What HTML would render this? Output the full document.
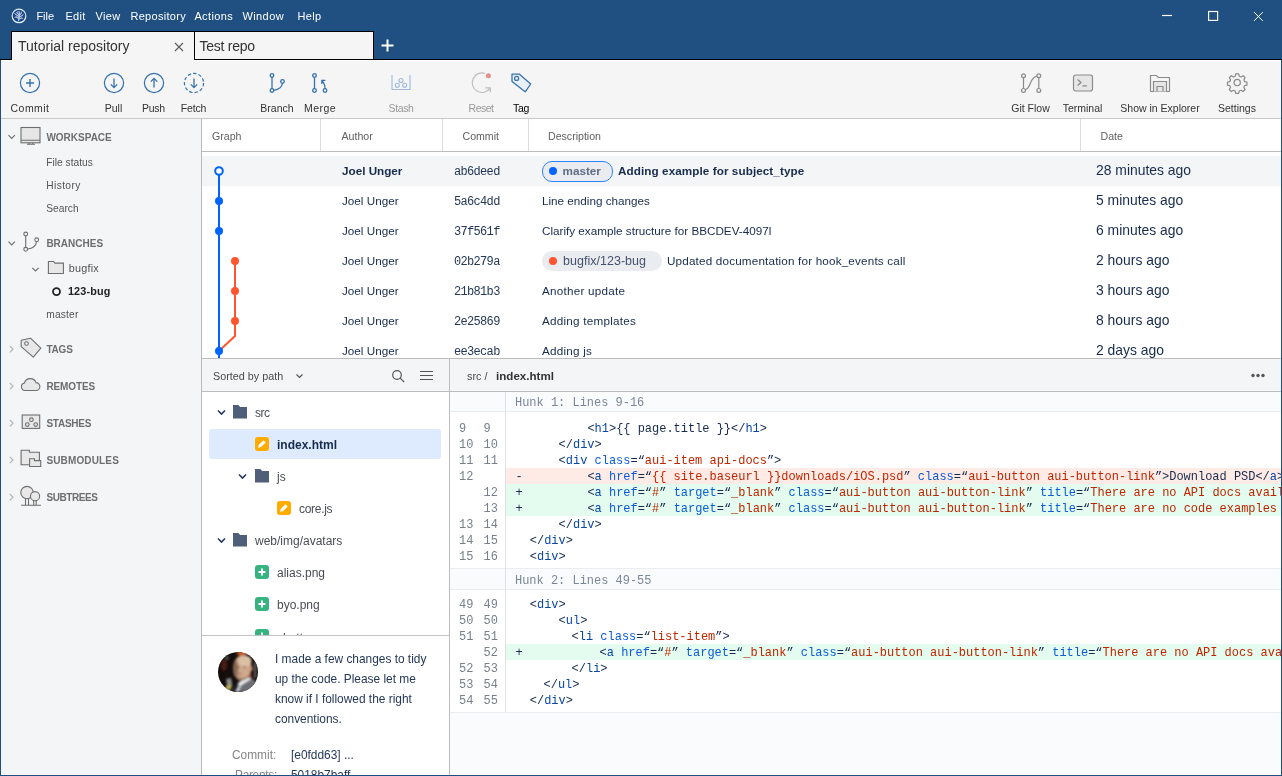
<!DOCTYPE html>
<html><head><meta charset="utf-8"><title>Sourcetree</title>
<style>
*{box-sizing:border-box;margin:0;padding:0}
html,body{width:1282px;height:776px;overflow:hidden;background:#205081;font-family:"Liberation Sans",sans-serif;font-size:12px;color:#172b4d}
.abs{position:absolute}
#win{position:absolute;left:0;top:0;width:1282px;height:776px;background:#205081;overflow:hidden;will-change:transform}
/* title / menu */
#menu{position:absolute;left:0;top:0;width:1282px;height:31px;color:#fff;font-size:11px}
#menu span{position:absolute;top:7.600px;margin-left:.400px;line-height:16px;white-space:nowrap}
/* tabs */
#tabline{position:absolute;left:0;top:59px;width:1282px;height:1px;background:#000}
.tab{position:absolute;top:31px;height:29px;background:#f5f5f5;border:1px solid #000;font-size:14px;color:#333;line-height:29px;white-space:nowrap}
#tab1{left:11px;width:183px;height:29px;border-bottom:none;border-right:none;padding-left:6px;z-index:2}
#tab2{left:194px;width:180px;padding-left:4.500px;letter-spacing:-.25px}
/* toolbar */
#toolbar{position:absolute;left:1px;top:60px;width:1280px;height:59px;background:#f5f5f5;border-bottom:1px solid #c8c8c8}
.tb{position:absolute;top:0;height:58px;width:100px;margin-left:-50px;text-align:center;font-size:10.500px;color:#333}
.tb svg{position:absolute;left:37px;top:10px;width:26px;height:26px;overflow:visible}
.tb span{position:absolute;left:0;width:100px;top:41px;line-height:14px;white-space:nowrap}
.tb.dis span{color:#999}
/* sidebar */
#side{position:absolute;left:1px;top:119px;width:200px;height:656px;background:#f4f5f7}
#sideb{position:absolute;left:201px;top:119px;width:1px;height:656px;background:#b9b9b9}
.sh{position:absolute;left:45.400px;font-weight:bold;font-size:10px;color:#6e6e6e;margin-top:.700px;line-height:14px;white-space:nowrap}
.si{position:absolute;left:45.300px;font-size:10.200px;color:#545454;margin-top:.600px;line-height:14px;white-space:nowrap}
/* main */
#main{position:absolute;left:202px;top:119px;width:1079px;height:656px;background:#fff}

/* table */
#thead{position:absolute;left:0;top:0;width:1079px;height:33px;border-bottom:1px solid #bcbcbc;background:#fff}
#thead span{position:absolute;top:10px;line-height:14px;font-size:10.600px;color:#606060;white-space:nowrap}
#thead i{position:absolute;top:0;width:1px;height:32px;background:#dcdcdc}
.row{position:absolute;left:0;width:1079px;height:30px;font-size:11.7px;color:#172b4d;white-space:nowrap}
.row span{position:absolute;top:8px;line-height:14px}
.row .a{left:140px}.row .h{left:252px;top:8.700px;font-family:"Liberation Mono",monospace;font-size:12px;letter-spacing:-.68px;color:#253858}
.row .d{left:340px}.row .t{left:894px;font-size:13.900px;top:6.300px;line-height:16px}
.row.sel{background:#f4f5f7;font-weight:bold}.row.sel .h,.row.sel .t{font-weight:normal}
.pill{position:absolute;top:5px;height:20px;border-radius:10px;background:#ebecf0;color:#5e6c84;font-weight:bold;font-size:11.7px;line-height:20px;padding-left:21px}
.pill i{position:absolute;left:7px;top:5.800px;width:8.400px;height:8.400px;border-radius:50%}
/* lower */
#lowtop{position:absolute;left:0;top:239px;width:1079px;height:1px;background:#bcbcbc}
#fhead{position:absolute;left:0;top:240px;width:1079px;height:33px;background:#f4f5f7;border-bottom:1px solid #bcbcbc;font-size:10.800px;color:#4a4a4a}
#fhead span{position:absolute;top:10px;line-height:14px;white-space:nowrap}
#vdiv{position:absolute;left:247px;top:240px;width:1px;height:416px;background:#bcbcbc}
#tree{position:absolute;left:0;top:273px;width:247px;height:243px;overflow:hidden;background:#fff;font-size:12px;color:#4a4d55}
#tree span{position:absolute;line-height:16px;white-space:nowrap}
#cmt{position:absolute;left:0;top:516px;width:247px;height:140px;border-top:1px solid #c4c4c4;background:#fff;overflow:hidden;font-size:11.900px;color:#253858}
#cmt span{position:absolute;white-space:nowrap;line-height:20px}
#diff{position:absolute;left:248px;top:273px;width:831px;height:383px;background:#fafbfc;overflow:hidden;font-family:"Liberation Mono",monospace;font-size:11.980px;color:#172b4d}
.hh{position:absolute;left:0;width:831px;height:21px;background:#fafbfc;border-top:1px solid #ebecf0;border-bottom:1px solid #ebecf0;color:#7a869a;line-height:22px;padding-left:65px;white-space:pre;overflow:hidden}
.hb{position:absolute;left:0;width:831px;background:#fff}
.gsep{position:absolute;left:55px;width:1px;background:#dfe1e6;z-index:1}
.ln{position:absolute;left:0;width:831px;height:16px;line-height:16px;white-space:pre}
.ln b{position:absolute;left:9px;top:1px;font-weight:normal;color:#78808c}
.ln b+b{left:33.500px}
.ln u{position:absolute;left:56px;right:0;top:0;height:16px;text-decoration:none}
.ln code{position:absolute;left:65.400px;top:1px;font:inherit;white-space:pre}
.ln.del u{background:#ffebe6}.ln.add u{background:#e3fcef}
.g{color:#0747a6}.n{color:#0b5cd9}.v{color:#bf2600}
</style></head><body>
<div id="win">
<div id="menu">
<svg class="abs" style="left:11px;top:8px" width="16" height="16" viewBox="0 0 16 16"><circle cx="8" cy="7.900" r="6.800" fill="#15478a" stroke="#e9eef5" stroke-width="1.200"/><g fill="none" stroke="#b9c8e0" stroke-linecap="round"><path d="M7.600 12.600C7.900 10.500 8 8.500 8.400 5.800" stroke-width="1.300"/><path d="M7.800 10.400L5.200 8.900M8 8.700L4.600 6.400M8.100 7.200L5.900 4.600M8.400 5.800L8.100 3.400M8.200 7.600L10.400 5M8 9.300L11.300 7.400M7.800 11L10.600 10" stroke-width="1.100"/><path d="M5.200 8.900L4 9.300M4.600 6.400L3.700 5.200M10.400 5L10.300 3.800M11.300 7.400L12.300 6.500M10.600 10L11.700 10.300M5.900 4.600L6.600 3.600" stroke-width=".9"/></g></svg>
<svg class="abs" style="left:1155px;top:5px" width="120" height="22" viewBox="0 0 120 22"><g fill="none" stroke="#fff" stroke-width="1.150"><path d="M7 10.500h10"/><rect x="53.600" y="6.500" width="9" height="8.900"/><path d="M99 7.100l8.800 8.800M107.800 7.100l-8.800 8.800" stroke-width="1"/></g></svg>
<span style="left:36px;letter-spacing:0px">File</span><span style="left:65px;letter-spacing:0.28px">Edit</span><span style="left:95px;letter-spacing:0.38px">View</span><span style="left:130px;letter-spacing:0.3px">Repository</span><span style="left:194px;letter-spacing:0.37px">Actions</span><span style="left:242px;letter-spacing:0.43px">Window</span><span style="left:297px;letter-spacing:0.39px">Help</span>
</div>
<div id="tabline"></div><div class="abs" style="left:1px;top:60px;width:11px;height:1px;background:#fff;z-index:3"></div><div class="abs" style="left:194px;top:60px;width:1087px;height:1px;background:#fff;z-index:3"></div>
<div class="tab" id="tab1">Tutorial repository<svg class="abs" style="left:162px;top:9.500px" width="10" height="10" viewBox="0 0 10 10"><path d="M1 1l8 8M9 1l-8 8" stroke="#5a5a5a" stroke-width="1.100" fill="none"/></svg></div>
<div class="tab" id="tab2">Test repo</div>
<svg class="abs" style="left:381.300px;top:38.500px" width="13" height="13" viewBox="0 0 13 13"><path d="M6.5 0.5v12M0.5 6.5h12" stroke="#fff" stroke-width="2" fill="none"/></svg>
<div id="toolbar">
<div class="tb" style="left:29px"><svg viewBox="0 0 26 26"><g fill="none" stroke="#3572b0" stroke-width="1.2"><circle cx="13" cy="13" r="9.6"/><path d="M13 9v8M9 13h8" stroke-width="1.4"/></g></svg><span style="letter-spacing:.45px">Commit</span></div>
<div class="tb" style="left:112.5px"><svg viewBox="0 0 26 26"><g fill="none" stroke="#3572b0" stroke-width="1.2"><circle cx="13" cy="13" r="9.6"/><path d="M13 8.5v9M9.8 14.4l3.2 3.2l3.2-3.2" stroke-width="1.3"/></g></svg><span>Pull</span></div>
<div class="tb" style="left:152.5px"><svg viewBox="0 0 26 26"><g fill="none" stroke="#3572b0" stroke-width="1.2"><circle cx="13" cy="13" r="9.6"/><path d="M13 17.5v-9M9.8 11.6l3.2-3.2l3.2 3.2" stroke-width="1.3"/></g></svg><span style="letter-spacing:-0.28px">Push</span></div>
<div class="tb" style="left:192.5px"><svg viewBox="0 0 26 26"><g fill="none" stroke="#3572b0" stroke-width="1.2"><circle cx="13" cy="13" r="9.6" stroke-dasharray="3.4 2.1"/><path d="M13 8.5v9M9.8 14.4l3.2 3.2l3.2-3.2" stroke-width="1.3"/></g></svg><span style="letter-spacing:-0.19px">Fetch</span></div>
<div class="tb" style="left:276px"><svg viewBox="0 0 26 26"><g fill="none" stroke="#3572b0" stroke-width="1.3"><circle cx="8" cy="5.5" r="1.8"/><circle cx="8" cy="20.5" r="1.8"/><circle cx="18.5" cy="11.5" r="1.8"/><path d="M8 7.3v11.4M9.8 20.3c5.5-.8 8.2-3.2 8.6-7"/></g></svg><span>Branch</span></div>
<div class="tb" style="left:319px"><svg viewBox="0 0 26 26"><g fill="none" stroke="#3572b0" stroke-width="1.3"><circle cx="7.500" cy="5.500" r="1.800"/><circle cx="7.500" cy="20.500" r="1.800"/><circle cx="18" cy="20.500" r="1.800"/><path d="M7.500 7.300v11.400M18 18.700c0-3.500-.8-5.800-3-8M14.800 14v-3.600h3.600"/></g></svg><span style="letter-spacing:0.4px">Merge</span></div>
<div class="tb dis" style="left:400px"><svg viewBox="0 0 26 26"><g fill="none" stroke="#9db9dc" stroke-width="1.1"><path d="M4 5v14.500h18V5"/><circle cx="13" cy="10.500" r="2"/><circle cx="9.300" cy="15.300" r="2"/><circle cx="16.700" cy="15.300" r="2"/></g></svg><span style="letter-spacing:-0.39px">Stash</span></div>
<div class="tb dis" style="left:480px"><svg viewBox="0 0 26 26"><g fill="none" stroke="#bdbdbd" stroke-width="1.200"><path d="M16.800 3.300A9.800 9.800 0 1 0 22 18.400M17.200 17.900H22.300V22.300"/></g><circle cx="20.400" cy="5.700" r="2.500" fill="#e88f8a"/></svg><span style="letter-spacing:-0.53px">Reset</span></div>
<div class="tb" style="left:520px"><svg viewBox="0 0 26 26"><g fill="#e9f0f9" stroke="#3572b0" stroke-width="1.3" stroke-linejoin="round"><path d="M4 4.2h7.5l11.2 9.8l-5.5 7.8L4 11.5z"/><circle cx="8.6" cy="8.4" r="2" fill="#f5f5f5"/></g></svg><span style="color:#000;letter-spacing:-0.32px">Tag</span></div>
<div class="tb" style="left:1029.5px"><svg viewBox="0 0 26 26"><g fill="none" stroke="#8a8a8a" stroke-width="1.2"><circle cx="5.500" cy="5.800" r="1.900"/><circle cx="5.500" cy="20.400" r="1.900"/><circle cx="20.800" cy="5.800" r="1.900"/><circle cx="20.800" cy="20.400" r="1.900"/><path d="M5.500 7.700v10.800M20.800 7.700v10.800M7.200 19.700c6.500-1.500 4-12.500 11.800-13.500"/></g></svg><span>Git Flow</span></div>
<div class="tb" style="left:1081.5px"><svg viewBox="0 0 26 26"><g fill="#e6e6e6" stroke="#8a8a8a" stroke-width="1.2"><rect x="3.5" y="5" width="19" height="16" rx="2.2"/><path d="M7.5 9.5l3.5 3l-3.5 3M12.5 15.8h4.5" fill="none"/></g></svg><span>Terminal</span></div>
<div class="tb" style="left:1159px"><svg viewBox="0 0 26 26"><g fill="none" stroke="#8a8a8a" stroke-width="1.2"><path d="M3.5 21.5V5.5h6l1.8 2h11.2v14z"/><path d="M6.5 21.5v-10h13v10" fill="#e6e6e6"/><path d="M10 21.5v-5h6v5"/></g></svg><span>Show in Explorer</span></div>
<div class="tb" style="left:1236px"><svg viewBox="0 0 26 26"><g fill="none" stroke="#8a8a8a" stroke-width="1.300" stroke-linejoin="round" transform="translate(13.200 12.600) scale(.92) translate(-13 -13)"><circle cx="13" cy="13" r="3.400"/><path d="M11.4 3.5h3.2l.6 2.6 1.9.8 2.3-1.4 2.2 2.2-1.4 2.3.8 1.9 2.6.6v3.2l-2.6.6-.8 1.9 1.4 2.3-2.2 2.2-2.3-1.4-1.9.8-.6 2.6h-3.2l-.6-2.6-1.9-.8-2.3 1.4-2.2-2.2 1.4-2.3-.8-1.9-2.6-.6v-3.2l2.6-.6.8-1.9-1.4-2.3 2.2-2.2 2.3 1.4 1.9-.8z"/></g></svg><span>Settings</span></div>
</div>
<div id="side">
<!-- chevrons -->
<svg class="abs" style="left:-.700px;top:0" width="200" height="420" viewBox="0 0 200 420"><g fill="none" stroke="#707070" stroke-width="1.200" transform="translate(1 0)"><path d="M7.500 16.200l3.200 3.200l3.200-3.200"/><path d="M7.500 122.700l3.200 3.200l3.200-3.200"/><path d="M31.300 148.800l3.200 3.200l3.200-3.200"/></g><g fill="none" stroke="#b5b5b5" stroke-width="1.200"><path d="M9.800 227l3.200 3.200l-3.200 3.200"/><path d="M9.800 264l3.200 3.200l-3.200 3.200"/><path d="M9.800 301l3.200 3.200l-3.200 3.200"/><path d="M9.800 337.800l3.200 3.200l-3.200 3.200"/><path d="M9.800 375l3.200 3.200l-3.200 3.200"/></g>
<!-- workspace monitor -->
<g fill="#e6e6e6" stroke="#6e6e6e" stroke-width="1.100" transform="translate(.500 0)"><rect x="20.500" y="8.500" width="19" height="15.300"/><path d="M20.500 21.300h19M26.500 25.300h8M28.700 23.800v1.500M32.300 23.800v1.500" fill="none"/></g>
<!-- branches icon -->
<g fill="none" stroke="#6e6e6e" stroke-width="1.100" transform="translate(1.200 0)"><circle cx="24.5" cy="115" r="1.9"/><circle cx="24.5" cy="130.3" r="1.9"/><circle cx="35.5" cy="120.8" r="1.9"/><path d="M24.5 117v11.4M26.4 130c5.5-.6 8.4-2.8 8.9-7.3"/></g>
<!-- bugfix folder -->
<path d="M48.400 154.500V142.500h5.200l1.300 1.600h8.500v10.400z" fill="#e8e8e8" stroke="#6e6e6e" stroke-width="1.100"/>
<!-- current branch ring -->
<circle cx="56.500" cy="172.600" r="3.500" fill="none" stroke="#222" stroke-width="1.800"/>
<!-- tags -->
<g fill="#e8e8e8" stroke="#6e6e6e" stroke-width="1.100" stroke-linejoin="round"><path d="M21.200 221.200l9.300-2l10.300 9.900l-7.500 9.100l-12.100-10.500z"/><circle cx="26.500" cy="224.500" r="1.800" fill="#f4f5f7"/></g>
<!-- cloud -->
<path d="M25.100 271.500H35.900A3.900 3.900 0 0 0 36 263.600A6.100 6.100 0 0 0 24.400 264A3.800 3.800 0 0 0 25.100 271.500z" fill="#e8e8e8" stroke="#6e6e6e" stroke-width="1.100"/>
<!-- stashes -->
<g fill="none" stroke="#6e6e6e" stroke-width="1.100"><rect x="22.200" y="296" width="17.500" height="13.400" fill="#e8e8e8"/><circle cx="31.400" cy="300.700" r="1.800"/><circle cx="27.300" cy="305.600" r="1.800"/><circle cx="35.700" cy="305.600" r="1.800"/></g>
<!-- submodules -->
<g fill="#e8e8e8" stroke="#6e6e6e" stroke-width="1.100"><path d="M21.100 345.700V331.300h8.300v1.900h10V345.700z"/><path d="M29.600 347.500V339.800h4.900v1.800h6.200v5.900z"/></g>
<!-- subtrees -->
<g fill="#e8e8e8" stroke="#6e6e6e" stroke-width="1.100"><path d="M25.500 379.500v6.800M28.500 379.500v6.800M33.700 381.500v4.800M36.200 381.500v4.800M21.100 386.300h19.800" fill="none"/><circle cx="27" cy="373.600" r="6.200"/><circle cx="35.050" cy="377.200" r="4.600"/></g>
</svg>
<div class="sh" style="top:11px">WORKSPACE</div>
<div class="si" style="top:36px">File status</div>
<div class="si" style="top:59px;letter-spacing:0.38px">History</div>
<div class="si" style="top:82px">Search</div>
<div class="sh" style="top:117px">BRANCHES</div>
<div class="si" style="top:141.200px;left:67.700px;font-size:10.800px;letter-spacing:0.25px">bugfix</div>
<div class="si" style="top:164.300px;left:66.900px;font-weight:bold;color:#222;font-size:10.800px;letter-spacing:0.17px">123-bug</div>
<div class="si" style="top:188px;letter-spacing:.17px">master</div>
<div class="sh" style="top:223px;letter-spacing:-0.18px">TAGS</div>
<div class="sh" style="top:260px;letter-spacing:-0.1px">REMOTES</div>
<div class="sh" style="top:297px;letter-spacing:-0.25px">STASHES</div>
<div class="sh" style="top:334px;letter-spacing:0.15px">SUBMODULES</div>
<div class="sh" style="top:371px;letter-spacing:-0.4px">SUBTREES</div>
</div><div id="sideb"></div>
<div id="main">
<div id="tablewrap" class="abs" style="left:0;top:0;width:1079px;height:239px;overflow:hidden;background:#fff">
<div class="row sel" style="top:37px"><span class="a">Joel Unger</span><span class="h">ab6deed</span><div class="pill" style="left:339.500px;top:4.500px;height:21px;width:71px;border:1.500px solid #2684ff;line-height:18px;padding-left:20px"><i style="background:#0065ff;left:6.200px;top:5.300px"></i>master</div><span style="left:416px;letter-spacing:0.08px">Adding example for subject_type</span><span class="t">28 minutes ago</span></div>
<div class="row " style="top:67px"><span class="a">Joel Unger</span><span class="h">5a6c4dd</span><span class="d">Line ending changes</span><span class="t">5 minutes ago</span></div>
<div class="row " style="top:97px"><span class="a">Joel Unger</span><span class="h">37f561f</span><span class="d">Clarify example structure for BBCDEV-4097l</span><span class="t">6 minutes ago</span></div>
<div class="row " style="top:127px"><span class="a">Joel Unger</span><span class="h">02b279a</span><div class="pill" style="left:340px;width:120px;font-weight:normal;color:#42526e;font-size:12.500px;letter-spacing:.02px"><i style="background:#ff5630"></i>bugfix/123-bug</div><span style="left:465px;letter-spacing:0.17px">Updated documentation for hook_events call</span><span class="t">2 hours ago</span></div>
<div class="row " style="top:157px"><span class="a">Joel Unger</span><span class="h">21b81b3</span><span class="d" style="letter-spacing:0.23px">Another update</span><span class="t">3 hours ago</span></div>
<div class="row " style="top:187px"><span class="a">Joel Unger</span><span class="h">2e25869</span><span class="d" style="letter-spacing:0.23px">Adding templates</span><span class="t">8 hours ago</span></div>
<div class="row " style="top:217px"><span class="a">Joel Unger</span><span class="h">ee3ecab</span><span class="d" style="letter-spacing:0.23px">Adding js</span><span class="t">2 days ago</span></div>
<svg class="abs" style="left:0;top:35px" width="118" height="205" viewBox="0 0 118 205"><g fill="none" stroke-width="2"><path d="M17 20.500V205" stroke="#0065ff"/><path d="M33 107V182L17 197" stroke="#ff5630"/></g><circle cx="17" cy="17" r="3.800" fill="#fff" stroke="#0065ff" stroke-width="2"/><g fill="#0065ff"><circle cx="17" cy="47" r="4"/><circle cx="17" cy="77" r="4"/><circle cx="17" cy="197" r="4"/></g><g fill="#ff5630"><circle cx="33" cy="107" r="4"/><circle cx="33" cy="137" r="4"/><circle cx="33" cy="167" r="4"/></g></svg>
<div id="thead"><span style="left:10px">Graph</span><i style="left:118px"></i><span style="left:139.500px">Author</span><i style="left:240px"></i><span style="left:260.500px">Commit</span><i style="left:326px"></i><span style="left:346px">Description</span><i style="left:878px"></i><span style="left:898.500px">Date</span></div>
</div>
<div id="lowtop"></div>
<div id="fhead"><span style="left:11px">Sorted by path</span><span style="left:265px">src /</span><span style="left:294px;font-weight:bold;font-size:11.600px;color:#333">index.html</span>
<svg class="abs" style="left:0;top:0" width="1079" height="32" viewBox="0 0 1079 32"><g fill="none" stroke="#555" stroke-width="1.200"><path d="M94.500 15.500l3 3l3-3"/><circle cx="195" cy="16" r="4.300"/><path d="M198.200 19.200l4 4"/><path d="M218 12.500h13M218 16.500h13M218 20.500h13"/></g><g fill="#555"><circle cx="1051" cy="16.500" r="1.700"/><circle cx="1056" cy="16.500" r="1.700"/><circle cx="1061" cy="16.500" r="1.700"/></g></svg>
</div>
<div id="tree"><div class="abs" style="left:7px;top:37px;width:232px;height:30px;border-radius:3px;background:#deebff"></div><svg class="abs" style="left:0;top:-2px" width="247" height="260" viewBox="0 0 247 260"><path d="M16.0 20.5l3.500 3.500l3.500-3.500" fill="none" stroke="#253858" stroke-width="1.600"/><path d="M31 15h5.500l1.500 2h7v11.500h-14z" fill="#505f79"/><rect x="53" y="47" width="14" height="14" rx="3" fill="#ffab00"/><path d="M56.0 57.9l.9-3.100l4.600-4.600l2.200 2.200l-4.600 4.600z" fill="#fff"/><path d="M37.0 84.5l3.500 3.500l3.500-3.500" fill="none" stroke="#253858" stroke-width="1.600"/><path d="M53 79h5.500l1.500 2h7v11.500h-14z" fill="#505f79"/><rect x="75" y="111" width="14" height="14" rx="3" fill="#ffab00"/><path d="M78.0 121.9l.9-3.100l4.600-4.600l2.200 2.200l-4.600 4.600z" fill="#fff"/><path d="M16.0 148.5l3.500 3.500l3.500-3.500" fill="none" stroke="#253858" stroke-width="1.600"/><path d="M31 143h5.500l1.500 2h7v11.500h-14z" fill="#505f79"/><rect x="53" y="175" width="14" height="14" rx="3" fill="#36b37e"/><path d="M60 178.5v7M56.5 182h7" stroke="#fff" stroke-width="2" fill="none"/><rect x="53" y="207" width="14" height="14" rx="3" fill="#36b37e"/><path d="M60 210.5v7M56.5 214h7" stroke="#fff" stroke-width="2" fill="none"/><rect x="53" y="239" width="14" height="14" rx="3" fill="#36b37e"/><path d="M60 242.5v7M56.5 246h7" stroke="#fff" stroke-width="2" fill="none"/></svg>
<span style="left:53px;top:13px;letter-spacing:-0.45px">src</span>
<span style="left:75px;top:45px;font-weight:bold;color:#172b4d">index.html</span>
<span style="left:75px;top:77px">js</span>
<span style="left:97px;top:109px;letter-spacing:-0.29px">core.js</span>
<span style="left:53px;top:141px">web/img/avatars</span>
<span style="left:75px;top:173px">alias.png</span>
<span style="left:75px;top:205px">byo.png</span>
<span style="left:75px;top:238px">chatty.png</span>
</div>
<div id="cmt">
<svg class="abs" style="left:16px;top:16px" width="40" height="40" viewBox="0 0 40 40"><defs><clipPath id="av"><circle cx="20" cy="20" r="20"/></clipPath><filter id="bl" x="-20%" y="-20%" width="140%" height="140%"><feGaussianBlur stdDeviation=".9"/></filter></defs><g clip-path="url(#av)"><rect width="40" height="40" fill="#140d0b"/><g filter="url(#bl)"><ellipse cx="24" cy="1" rx="5" ry="2.500" fill="#d2531c"/><ellipse cx="6" cy="13" rx="3" ry="6" fill="#4a1a14"/><ellipse cx="9" cy="6" rx="2" ry="2" fill="#4d554c"/><rect x="36" y="10" width="2.500" height="16" fill="#5e5e58"/><ellipse cx="31" cy="25" rx="3" ry="5" fill="#8a3a1e"/><ellipse cx="24.500" cy="15" rx="9" ry="11.800" fill="#cfa98c"/><ellipse cx="27" cy="9" rx="6.500" ry="5.500" fill="#dcc0a4"/><ellipse cx="17.800" cy="17" rx="2.600" ry="8" fill="#8d6b56"/><ellipse cx="32.800" cy="16.500" rx="1.600" ry="3" fill="#c9977b"/><path d="M16.500 21c1 6 4 8 7.500 8c3 0 6-2 8-6c-3 2.500-6 3-8 3c-3 0-5.500-1.500-7.500-5z" fill="#a07f66"/><ellipse cx="20" cy="15.300" rx="1.700" ry=".700" fill="#6b5347"/><ellipse cx="26.500" cy="15.300" rx="1.800" ry=".700" fill="#7b6557"/><ellipse cx="21.500" cy="22" rx="2.200" ry=".700" fill="#a06a5c"/><path d="M22 29l10-4l8 6v9H14z" fill="#6d6e73"/><path d="M16 40l4-9l11.500-5.500l1.200 1.800l-9.700 6l-3 6.700z" fill="#f1f1f3"/><path d="M14 40l5.500-8.500l2 1.500l-3.500 7z" fill="#2b3550"/><path d="M8 27l5-1l1.500 8l-5 1z" fill="#8e8e8e"/><ellipse cx="10.500" cy="35.500" rx="3" ry="2.500" fill="#b9b04c"/></g></g></svg>
<span style="left:73px;top:13px">I made a few changes to tidy</span>
<span style="left:73px;top:33px">up the code. Please let me</span>
<span style="left:73px;top:53px">know if I followed the right</span>
<span style="left:73px;top:73px">conventions.</span>
<span style="left:30px;top:109px;color:#858585">Commit:</span><span style="left:89px;top:109px">[e0fdd63] ...</span>
<span style="left:33px;top:129px;color:#858585;letter-spacing:-.3px">Parents:</span><span style="left:89px;top:129px">5018b7baff</span>
</div>
<div id="diff">
<div class="hb" style="top:0;height:321px;border-bottom:1px solid #ebecf0"></div>
<div class="gsep" style="top:0;height:320px"></div>
<div class="hh" style="top:0;border-top:none;height:20px">Hunk 1: Lines 9-16</div>
<div class="ln " style="top:28px"><u></u><b>9</b><b>9</b><code style="left:137.4px">&lt;<span class="g">h1</span>&gt;{{ page.title }}&lt;/<span class="g">h1</span>&gt;</code></div>
<div class="ln " style="top:44px"><u></u><b>10</b><b>10</b><code style="left:108.6px">&lt;/<span class="g">div</span>&gt;</code></div>
<div class="ln " style="top:60px"><u></u><b>11</b><b>11</b><code style="left:108.6px">&lt;<span class="g">div</span> <span class="n">class</span>=“<span class="v">aui-item api-docs</span>”&gt;</code></div>
<div class="ln del" style="top:76px"><u></u><b>12</b><b></b><code>-</code><code style="left:137.4px">&lt;<span class="g">a</span> <span class="n">href</span>=“<span class="v">{{ site.baseurl }}downloads/iOS.psd</span>” <span class="n">class</span>=“<span class="v">aui-button aui-button-link</span>”&gt;Download PSD&lt;/<span class="g">a</span>&gt;</code></div>
<div class="ln add" style="top:92px"><u></u><b></b><b>12</b><code>+</code><code style="left:137.4px">&lt;<span class="g">a</span> <span class="n">href</span>=“<span class="v">#</span>” <span class="n">target</span>=“<span class="v">_blank</span>” <span class="n">class</span>=“<span class="v">aui-button aui-button-link</span>” <span class="n">title</span>=“<span class="v">There are no API docs available</span>”&gt;</code></div>
<div class="ln add" style="top:108px"><u></u><b></b><b>13</b><code>+</code><code style="left:137.4px">&lt;<span class="g">a</span> <span class="n">href</span>=“<span class="v">#</span>” <span class="n">target</span>=“<span class="v">_blank</span>” <span class="n">class</span>=“<span class="v">aui-button aui-button-link</span>” <span class="n">title</span>=“<span class="v">There are no code examples available</span>”&gt;</code></div>
<div class="ln " style="top:124px"><u></u><b>13</b><b>14</b><code style="left:108.6px">&lt;/<span class="g">div</span>&gt;</code></div>
<div class="ln " style="top:140px"><u></u><b>14</b><b>15</b><code style="left:79.8px">&lt;/<span class="g">div</span>&gt;</code></div>
<div class="ln " style="top:156px"><u></u><b>15</b><b>16</b><code style="left:79.8px">&lt;<span class="g">div</span>&gt;</code></div>
<div class="hh" style="top:176px;height:22px;line-height:24.500px">Hunk 2: Lines 49-55</div>
<div class="ln " style="top:204px"><u></u><b>49</b><b>49</b><code style="left:79.8px">&lt;<span class="g">div</span>&gt;</code></div>
<div class="ln " style="top:220px"><u></u><b>50</b><b>50</b><code style="left:108.6px">&lt;<span class="g">ul</span>&gt;</code></div>
<div class="ln " style="top:236px"><u></u><b>51</b><b>51</b><code style="left:121.6px">&lt;<span class="g">li</span> <span class="n">class</span>=“<span class="v">list-item</span>”&gt;</code></div>
<div class="ln add" style="top:252px"><u></u><b></b><b>52</b><code>+</code><code style="left:149.6px">&lt;<span class="g">a</span> <span class="n">href</span>=“<span class="v">#</span>” <span class="n">target</span>=“<span class="v">_blank</span>” <span class="n">class</span>=“<span class="v">aui-button aui-button-link</span>” <span class="n">title</span>=“<span class="v">There are no API docs available</span>”&gt;</code></div>
<div class="ln " style="top:268px"><u></u><b>52</b><b>53</b><code style="left:121.6px">&lt;/<span class="g">li</span>&gt;</code></div>
<div class="ln " style="top:284px"><u></u><b>53</b><b>54</b><code style="left:93.5px">&lt;/<span class="g">ul</span>&gt;</code></div>
<div class="ln " style="top:300px"><u></u><b>54</b><b>55</b><code style="left:79.8px">&lt;/<span class="g">div</span>&gt;</code></div>
</div>
<div id="vdiv"></div>
</div>
</div>
</body></html>
